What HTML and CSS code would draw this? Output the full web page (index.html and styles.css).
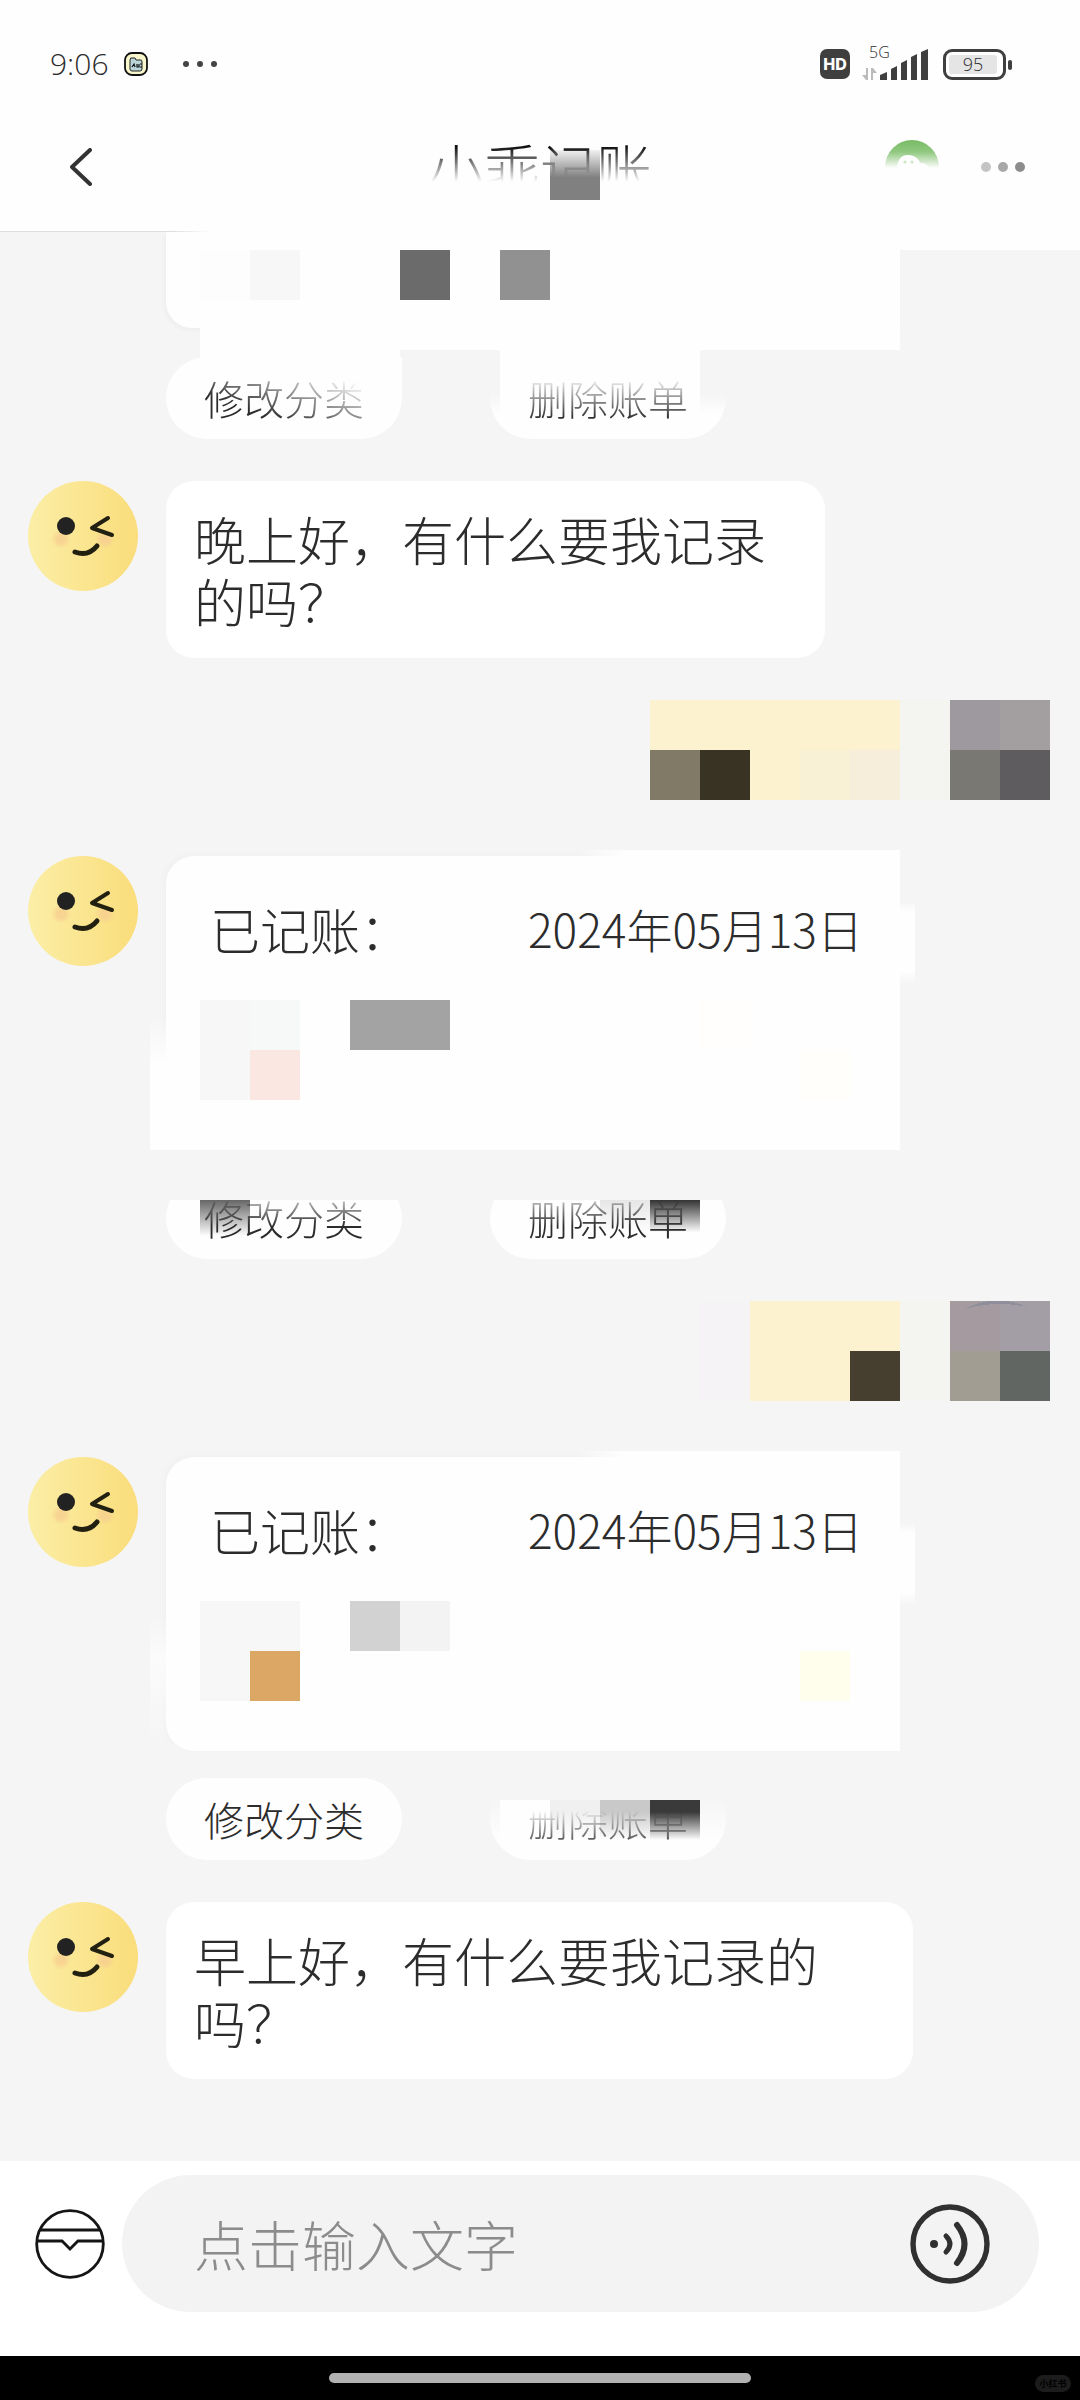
FILE: index.html
```html
<!DOCTYPE html>
<html lang="zh-CN">
<head>
    <meta charset="utf-8">
    <meta name="viewport" content="width=device-width, initial-scale=1">
    <title>小乖记账</title>
    <link rel="stylesheet" href="styles.css">
</head>
<body>
    <!-- shared avatar drawing -->
    <svg class="defs" width="0" height="0" aria-hidden="true">
        <defs>
            <linearGradient id="faceFill" x1="0" y1="0" x2="1" y2="0">
                <stop offset="0" stop-color="#fbeea6"/>
                <stop offset="1" stop-color="#fadd7b"/>
            </linearGradient>
            <radialGradient id="blush">
                <stop offset="0.4" stop-color="#f7cf90" stop-opacity="0.8"/>
                <stop offset="1" stop-color="#f7cf90" stop-opacity="0"/>
            </radialGradient>
            <symbol id="face" viewBox="0 0 110 110">
                <circle cx="55" cy="55" r="55" fill="url(#faceFill)"/>
                <circle cx="33" cy="58" r="10" fill="url(#blush)"/>
                <circle cx="77" cy="58" r="10" fill="url(#blush)"/>
                <circle cx="38" cy="45" r="9" fill="#222"/>
                <path d="M80 37 L64 47 L84 54" fill="none" stroke="#222010" stroke-width="4" stroke-linecap="round" stroke-linejoin="round"/>
                <path d="M47 71 Q60 76 69 65" fill="none" stroke="#222010" stroke-width="5" stroke-linecap="round"/>
            </symbol>
        </defs>
    </svg>

    <header class="header">
        <div class="status">
            <span class="time">9:06</span>
            <svg class="app-icon" width="24" height="24" viewBox="0 0 24 24">
                <rect x="1" y="1" width="22" height="22" rx="7" fill="#f8f6cc" stroke="#111" stroke-width="1.8"/>
                <path d="M6 8 Q6 5 9 6 L11 6 L12 8 L17 8 Q18 8 18 10 L18 17 Q18 19 16 19 L8 19 Q6 19 6 17 Z" fill="#b9d5d8" stroke="#222" stroke-width="1"/>
                <path d="M8 15 L10 12 L11 15 M13 12 V15 H15 V12 M16 12 H18 M16 15 H18" fill="none" stroke="#111" stroke-width="1.2"/>
            </svg>
            <svg class="more-apps" width="34" height="8" viewBox="0 0 34 8" fill="#444">
                <circle cx="3" cy="4" r="3"/><circle cx="17" cy="4" r="3"/><circle cx="31" cy="4" r="3"/>
            </svg>
            <span class="hd">HD</span>
            <div class="signal">
                <span class="net">5G</span>
                <svg width="68" height="34" viewBox="0 0 68 34">
                    <path d="M6 21 V33 H4 L0 28 H4 V21 Z M9 33 V21 H11 L15 26 H11 V33 Z" fill="#bbb"/>
                    <g fill="#3f3f3f">
                        <path d="M18 28 L25 25 V33 H18 Z"/><path d="M29 22 L35 19 V33 H29 Z"/>
                        <path d="M39 16 L45 13 V33 H39 Z"/><path d="M49 10 L55 7 V33 H49 Z"/>
                        <path d="M59 5 L66 2 V33 H59 Z"/>
                    </g>
                </svg>
            </div>
            <div class="battery"><span>95</span></div>
        </div>
        <nav class="nav">
            <button class="icon-btn back" aria-label="返回">
                <svg width="22" height="38" viewBox="0 0 22 38" fill="none" stroke="#333" stroke-width="4" stroke-linecap="round" stroke-linejoin="round"><path d="M20 2 L2 19 L20 36"/></svg>
            </button>
            <h1 class="title">小乖记账</h1>
            <div class="nav-actions">
                <svg width="54" height="54" viewBox="0 0 54 54">
                    <defs>
                        <linearGradient id="greenFade" x1="0" y1="0" x2="0" y2="1">
                            <stop offset="0" stop-color="#79bb65"/>
                            <stop offset="0.22" stop-color="#90c880"/>
                            <stop offset="0.52" stop-color="#fefefe"/>
                        </linearGradient>
                    </defs>
                    <circle cx="27" cy="27" r="27" fill="url(#greenFade)"/>
                    <path d="M12 28 Q13 15 23 15 Q32 15 35 23 Q42 23 44 28 Z" fill="#fefefe"/>
                    <circle cx="20" cy="22" r="1.6" fill="#cde8c5"/><circle cx="27" cy="22" r="1.6" fill="#cde8c5"/>
                </svg>
                <button class="icon-btn" aria-label="更多">
                    <svg width="44" height="10" viewBox="0 0 44 10">
                        <circle cx="5" cy="5" r="5" fill="#c4c4c4"/><circle cx="22" cy="5" r="5" fill="#a8a8a8"/><circle cx="39" cy="5" r="5" fill="#8c8c8c"/>
                    </svg>
                </button>
            </div>
        </nav>
    </header>

    <main class="chat">
        <section class="message first">
            <div class="content">
                <div class="card card-cut">
                    <svg class="mosaic" width="700" height="50" shape-rendering="crispEdges">
                        <rect x="0" width="50" height="50" fill="#fdfdfd"/>
                        <rect x="50" width="50" height="50" fill="#f7f7f7"/>
                        <rect x="200" width="50" height="50" fill="#6b6b6b"/>
                        <rect x="300" width="50" height="50" fill="#919191"/>
                    </svg>
                </div>
                <div class="actions">
                    <button class="pill grow-left"><span class="fade-right">修改分类</span></button>
                    <button class="pill grow-right"><span class="fade-top">删除账单</span></button>
                </div>
            </div>
        </section>

        <section class="message">
            <svg class="avatar"><use href="#face"/></svg>
            <div class="content"><p class="bubble narrow">晚上好，有什么要我记录的吗？</p></div>
        </section>

        <section class="message mine">
            <svg class="mosaic" width="400" height="100" shape-rendering="crispEdges">
                <rect x="0" width="250" height="100" fill="#fdf2d0"/>
                <rect x="0" y="50" width="50" height="50" fill="#807a66"/>
                <rect x="50" y="50" width="50" height="50" fill="#383323"/>
                <rect x="150" y="50" width="50" height="50" fill="#f9f1d6"/>
                <rect x="200" y="50" width="50" height="50" fill="#f6eeda"/>
                <rect x="250" width="50" height="100" fill="#f4f5f1"/>
                <rect x="300" width="50" height="50" fill="#9e999e"/>
                <rect x="350" width="50" height="50" fill="#a39ea0"/>
                <rect x="300" y="50" width="50" height="50" fill="#797872"/>
                <rect x="350" y="50" width="50" height="50" fill="#5f5c5f"/>
            </svg>
        </section>

        <section class="message">
            <svg class="avatar"><use href="#face"/></svg>
            <div class="content">
                <div class="card card-bill square-left">
                    <div class="bill-head"><span class="bill-label">已记账：</span><time class="bill-date" datetime="2024-05-13">2024年05月13日</time></div>
                    <svg class="mosaic" width="700" height="100" shape-rendering="crispEdges">
                        <rect width="100" height="100" fill="#f7f7f7"/>
                        <rect x="50" width="50" height="50" fill="#f7f9f9"/>
                        <rect x="50" y="50" width="50" height="50" fill="#fae7e1"/>
                        <rect x="150" width="100" height="50" fill="#a3a3a3"/>
                        <rect x="500" width="50" height="50" fill="#fffefc"/>
                        <rect x="600" y="50" width="50" height="50" fill="#fffefb"/>
                    </svg>
                </div>
                <div class="actions clipped">
                    <button class="pill shade-a"><span class="fade-soft">修改分类</span></button>
                    <button class="pill shade-b"><span class="fade-soft">删除账单</span></button>
                </div>
            </div>
        </section>

        <section class="message mine">
            <svg class="mosaic" width="350" height="100" shape-rendering="crispEdges">
                <rect x="0" width="50" height="100" fill="#f5f3f6"/>
                <rect x="50" width="150" height="100" fill="#fdf2d0"/>
                <rect x="150" y="50" width="50" height="50" fill="#463f30"/>
                <rect x="200" width="50" height="100" fill="#f4f5f1"/>
                <rect x="250" width="50" height="50" fill="#a49aa0"/>
                <rect x="300" width="50" height="50" fill="#a39da5"/>
                <path d="M265 8 Q296 -8 327 6 Q296 -1 265 8" fill="#8f8f9c"/>
                <rect x="250" y="50" width="50" height="50" fill="#a19d93"/>
                <rect x="300" y="50" width="50" height="50" fill="#626663"/>
            </svg>
        </section>

        <section class="message">
            <svg class="avatar"><use href="#face"/></svg>
            <div class="content">
                <div class="card card-bill late">
                    <div class="bill-head"><span class="bill-label">已记账：</span><time class="bill-date" datetime="2024-05-13">2024年05月13日</time></div>
                    <svg class="mosaic" width="700" height="100" shape-rendering="crispEdges">
                        <rect width="100" height="100" fill="#f7f7f7"/>
                        <rect x="50" y="50" width="50" height="50" fill="#dca664"/>
                        <rect x="150" width="50" height="50" fill="#d2d2d2"/>
                        <rect x="200" width="50" height="50" fill="#f3f3f3"/>
                        <rect x="600" y="50" width="50" height="50" fill="#fffdec"/>
                    </svg>
                </div>
                <div class="actions">
                    <button class="pill">修改分类</button>
                    <button class="pill cut"><span class="fade-deep">删除账单</span></button>
                </div>
            </div>
        </section>

        <section class="message">
            <svg class="avatar"><use href="#face"/></svg>
            <div class="content"><p class="bubble">早上好，有什么要我记录的吗？</p></div>
        </section>
    </main>

    <form class="composer" onsubmit="event.preventDefault();">
        <button type="button" class="icon-btn" aria-label="卡包">
            <svg width="70" height="70" viewBox="0 0 70 70" fill="none" stroke="#151515" stroke-width="2.8">
                <circle cx="35" cy="35" r="33.3"/>
                <path d="M5 21 H65 M2 32 H27 L35 40 L43 32 H68"/>
            </svg>
        </button>
        <div class="input-box">
            <input type="text" name="message" placeholder="点击输入文字" aria-label="点击输入文字">
            <button type="button" class="icon-btn" aria-label="语音输入">
                <svg width="80" height="80" viewBox="0 0 80 80" fill="none" stroke="#303030" stroke-width="6" stroke-linecap="round">
                    <circle cx="40" cy="40" r="37" stroke-width="5.4"/>
                    <circle cx="24" cy="40" r="4" fill="#303030" stroke="none"/>
                    <path d="M36 32 Q44 40 36 48" stroke-width="5"/>
                    <path d="M47 21 Q62 40 47 59"/>
                </svg>
            </button>
        </div>
    </form>

    <footer class="gesture-bar">
        <span class="handle"></span>
        <span class="watermark">小红书</span>
    </footer>
</body>
</html>
```
FILE: styles.css
```css
* {
    box-sizing: border-box;
}

body {
    margin: 0;
    min-height: 100vh;
    display: flex;
    flex-direction: column;
    background-color: #f5f5f5;
    color: #2c2c2c;
    font-family: "Noto Sans CJK SC", sans-serif;
    font-weight: 300;
}

button {
    border: none;
    padding: 0;
    background: none;
    color: inherit;
    font-family: inherit;
    font-weight: inherit;
    cursor: pointer;
}

svg {
    display: block;
    flex: none;
}

.defs {
    position: absolute;
}

.icon-btn {
    display: flex;
}

/* header */
.header {
    position: relative;
    z-index: 1;
    background-color: #fefefe;
}

.header::after {
    content: "";
    position: absolute;
    top: 100%;
    left: 200px;
    right: 0;
    height: 18px;
    background-color: #fefefe;
}

.header::before {
    content: "";
    position: absolute;
    left: 0;
    bottom: 0;
    width: 212px;
    height: 1px;
    background: linear-gradient(to right, #ddd 80%, #fefefe);
}

.status {
    display: flex;
    align-items: center;
    height: 104px;
    padding: 24px 68px 0 50px;
}

.time {
    width: 74px;
    font-family: "Open Sans", sans-serif;
    font-size: 30px;
    line-height: 40px;
}

.more-apps {
    margin-left: 35px;
}

.hd {
    margin-left: auto;
    width: 30px;
    border-radius: 7px;
    background-color: #3f3f3f;
    color: #fff;
    font-family: Inter, sans-serif;
    font-size: 16px;
    font-weight: 800;
    line-height: 30px;
    text-align: center;
}

.signal {
    position: relative;
    margin: 0 13px 0 12px;
}

.net {
    position: absolute;
    top: -5px;
    left: 7px;
    font-family: "Open Sans", sans-serif;
    font-size: 16px;
    line-height: 20px;
}

.battery {
    position: relative;
    width: 63px;
    height: 31px;
    margin-right: 6px;
    padding: 3px;
    border: 3px solid #3f3f3f;
    border-radius: 9px;
}

.battery span {
    display: block;
    width: 48px;
    border-radius: 3px;
    background-color: #e5e5e5;
    font-family: "Open Sans", sans-serif;
    font-size: 18px;
    line-height: 19px;
    text-align: center;
}

.battery::after {
    content: "";
    position: absolute;
    top: 8px;
    right: -9px;
    width: 4px;
    height: 10px;
    border-radius: 2px;
    background-color: #3f3f3f;
}

.nav {
    display: grid;
    grid-template-columns: 1fr auto 1fr;
    align-items: center;
    height: 128px;
    padding: 0 55px 2px;
}

.back {
    justify-self: start;
    padding-left: 15px;
}

.title {
    position: relative;
    margin: 0;
    font-size: 56px;
    font-weight: 300;
    line-height: 64px;
    color: #111;
}

/* the title runs out into white */
.title::before {
    content: "";
    position: absolute;
    inset: 12px 0 -6px;
    background: linear-gradient(to bottom, rgba(254, 254, 254, 0), #fefefe 60%);
}

.title::after {
    content: "";
    position: absolute;
    top: 15px;
    left: 122px;
    width: 50px;
    height: 50px;
    background: linear-gradient(to bottom, rgba(128, 128, 128, 0.1), #808080 55%);
}

.nav-actions {
    display: flex;
    align-items: center;
    justify-self: end;
    gap: 42px;
}

/* chat */
.chat {
    flex: 1;
    display: flex;
    flex-direction: column;
    gap: 42px;
    padding: 0 28px 81px;
}

.message {
    display: flex;
    gap: 28px;
}

.message.first {
    padding-left: 138px;
}

.message.mine {
    justify-content: flex-end;
    padding: 0 2px 14px 0;
}

.avatar {
    width: 110px;
    height: 110px;
}

.content {
    flex: 1;
    min-width: 0;
}

.bubble {
    max-width: 747px;
    margin: 0;
    padding: 27px 48px 26px 28px;
    border-radius: 28px;
    background-color: #fff;
    font-size: 52px;
    line-height: 62px;
}

.bubble.narrow {
    max-width: 659px;
}

.card {
    position: relative;
    max-width: 734px;
    background-color: #fefefe;
}

.card .mosaic {
    margin-left: 34px;
}

.card-cut {
    height: 96px;
    margin-bottom: 29px;
    padding-top: 18px;
    border-radius: 0 0 0 26px;
    box-shadow: -2px 2px 4px rgba(0, 0, 0, 0.03);
}

.card-cut::after {
    content: "";
    position: absolute;
    top: 68px;
    left: 34px;
    right: 0;
    height: 50px;
    background-color: #fefefe;
}

.card-bill {
    margin-bottom: 27px;
    padding: 41px 0 50px;
    border-radius: 28px 0 0 28px;
    box-shadow: -3px -2px 6px rgba(0, 0, 0, 0.02);
}

.card-bill.square-left {
    border-bottom-left-radius: 0;
}

/* raised top edge */
.card-bill .bill-head::before {
    content: "";
    position: absolute;
    top: -6px;
    left: 410px;
    right: 0;
    height: 6px;
    background: linear-gradient(to right, rgba(254, 254, 254, 0), #fefefe 15%);
}

.card-bill::before {
    content: "";
    position: absolute;
    top: 46px;
    right: -15px;
    width: 15px;
    height: 82px;
    background: linear-gradient(to bottom, rgba(254, 254, 254, 0), #fefefe 12%, #fefefe 85%, rgba(254, 254, 254, 0));
}

.card-bill::after {
    content: "";
    position: absolute;
    left: -16px;
    bottom: 0;
    width: 16px;
    height: 134px;
    background: linear-gradient(to bottom, rgba(254, 254, 254, 0), #fefefe 35%);
}

.card-bill.late::before {
    top: 66px;
}

.card-bill.late::after {
    background: linear-gradient(to bottom, rgba(252, 252, 252, 0), #fbfbfb 30%, rgba(252, 252, 252, 0) 95%);
}

.bill-head {
    display: flex;
    align-items: center;
    height: 62px;
    margin-bottom: 41px;
    padding-left: 44px;
}

.bill-label {
    width: 318px;
    font-size: 50px;
    line-height: 62px;
}

.bill-date {
    font-size: 46px;
    line-height: 62px;
    white-space: nowrap;
}

.actions {
    position: relative;
    display: flex;
    gap: 88px;
}

.pill {
    position: relative;
    width: 236px;
    height: 82px;
    border-radius: 41px;
    background-color: #fefefe;
    font-size: 40px;
    line-height: 82px;
}

.pill span {
    position: relative;
    display: block;
}

.grow-left {
    border-top-right-radius: 0;
}

.grow-left::before {
    content: "";
    position: absolute;
    top: -7px;
    left: 34px;
    width: 200px;
    height: 30px;
    background-color: #fefefe;
}

.grow-right::before {
    content: "";
    position: absolute;
    top: -7px;
    left: 10px;
    width: 200px;
    height: 75px;
    background-color: #fefefe;
}

.grow-right {
    background: linear-gradient(to bottom, #f5f5f5 45%, #fefefe 70%);
}

.fade-top {
    -webkit-mask-image: linear-gradient(to bottom, transparent 25%, #000 75%);
    mask-image: linear-gradient(to bottom, transparent 25%, #000 75%);
}

.fade-deep {
    -webkit-mask-image: linear-gradient(to bottom, transparent 40%, #000 85%);
    mask-image: linear-gradient(to bottom, transparent 40%, #000 85%);
}

.fade-right {
    -webkit-mask-image: linear-gradient(to bottom left, transparent 25%, #000 65%);
    mask-image: linear-gradient(to bottom left, transparent 25%, #000 65%);
}

.fade-soft {
    -webkit-mask-image: linear-gradient(to bottom, transparent 15%, #000 60%);
    mask-image: linear-gradient(to bottom, transparent 15%, #000 60%);
}

/* upper part of the row is hidden */
.clipped::after {
    content: "";
    position: absolute;
    inset: 0 0 auto;
    height: 23px;
    background-color: #f5f5f5;
}

.shade-a::before,
.shade-b::before {
    content: "";
    position: absolute;
    top: 23px;
    left: 34px;
    width: 50px;
    height: 36px;
    background: linear-gradient(to bottom, #666, #fefefe);
}

.shade-b::before {
    left: 110px;
    width: 100px;
    background:
        linear-gradient(to bottom, rgba(254, 254, 254, 0), #fefefe 90%),
        linear-gradient(to right, #e6e6e6 50%, #333 50%);
}

.pill.cut {
    background: linear-gradient(to bottom, #f5f5f5 25%, #fefefe 75%);
}

.pill.cut::before {
    content: "";
    position: absolute;
    top: 22px;
    left: 10px;
    width: 200px;
    height: 40px;
    background:
        linear-gradient(to bottom, rgba(254, 254, 254, 0) 30%, #fefefe),
        linear-gradient(to right, #fefefe 25%, #f0f0f0 25% 50%, #c9c9c9 50% 75%, #3a3a3a 75%);
}

/* composer */
.composer {
    display: flex;
    align-items: center;
    gap: 17px;
    padding: 14px 41px 44px 35px;
    background-color: #fff;
}

.input-box {
    flex: 1;
    display: flex;
    align-items: center;
    height: 137px;
    padding: 0 49px 0 72px;
    border-radius: 69px;
    background-color: #f3f3f3;
}

.input-box input {
    flex: 1;
    min-width: 0;
    padding: 0;
    border: none;
    outline: none;
    background: none;
    color: #303030;
    font-family: inherit;
    font-size: 54px;
    font-weight: 300;
    line-height: 64px;
}

.input-box input::placeholder {
    color: #8c8c8c;
    opacity: 1;
}

.gesture-bar {
    position: relative;
    display: flex;
    align-items: center;
    justify-content: center;
    height: 44px;
    background-color: #000;
}

.handle {
    width: 39%;
    height: 10px;
    border-radius: 5px;
    background-color: #b1b1b1;
}

.watermark {
    position: absolute;
    right: 9px;
    bottom: 8px;
    width: 36px;
    border-radius: 9px;
    background-color: #1c1c1c;
    color: #000;
    font-size: 9px;
    font-weight: 700;
    line-height: 17px;
    text-align: center;
}
```
